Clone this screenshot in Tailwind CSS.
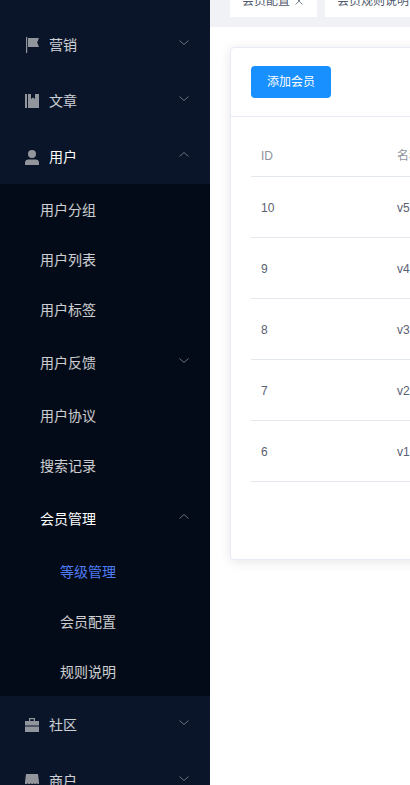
<!DOCTYPE html>
<html lang="zh-CN">
<head>
<meta charset="utf-8">
<title>等级管理</title>
<script src="https://cdn.jsdelivr.net/npm/@tailwindcss/browser@4"></script>
</head>
<body class="overflow-hidden bg-white font-['Liberation_Sans','Noto_Sans_CJK_SC',sans-serif]">
<div class="flex h-[785px] w-[410px] overflow-hidden">
    <!-- Sidebar -->
    <aside class="w-[210px] h-full shrink-0 overflow-hidden bg-[#0a1529] pt-4 text-sm text-white/80">
        <div class="flex h-14 items-center pt-[2px] pl-[25px] pr-[21px]">
            <svg class="w-[14px] h-4 mr-[10px] fill-[#93959c]" viewBox="0 0 14 16"><path d="M1 0h1.200v16H1zM3 1h11l-1.800 4.500L14 10H3z"/></svg>
            <span class="flex-1">营销</span>
            <svg class="w-[10px] h-[5px] mb-[6px] stroke-[#6a7280] fill-none" viewBox="0 0 10 5"><path d="M.5.5 5 4.500 9.500.5"/></svg>
        </div>
        <div class="flex h-14 items-center pt-[2px] pl-[25px] pr-[21px]">
            <svg class="w-[14px] h-[14px] mr-[10px] fill-[#93959c]" viewBox="0 0 14 14"><path d="M0 0h2v14H0zM3 0h3v5l2-1.500L10 5V0h4v14H3z"/></svg>
            <span class="flex-1">文章</span>
            <svg class="w-[10px] h-[5px] mb-[6px] stroke-[#6a7280] fill-none" viewBox="0 0 10 5"><path d="M.5.5 5 4.500 9.500.5"/></svg>
        </div>
        <div class="flex h-14 items-center pt-[2px] pl-[25px] pr-[21px] text-white">
            <svg class="w-[14px] h-[15px] mr-[10px] fill-[#93959c]" viewBox="0 0 14 15"><circle cx="7" cy="4" r="4"/><path d="M0 15v-2.500C0 10.500 1.500 9.500 3.500 9.500h7c2 0 3.500 1 3.500 3V15z"/></svg>
            <span class="flex-1">用户</span>
            <svg class="w-[10px] h-[5px] mb-[6px] stroke-[#6a7280] fill-none" viewBox="0 0 10 5"><path d="M.5 4.500 5 .5l4.500 4"/></svg>
        </div>
        <!-- Submenu -->
        <div class="bg-[#030b18]">
            <div class="flex h-[50px] items-center pt-[2px] pl-10">用户分组</div>
            <div class="flex h-[50px] items-center pt-[2px] pl-10">用户列表</div>
            <div class="flex h-[50px] items-center pt-[2px] pl-10">用户标签</div>
            <div class="flex h-14 items-center pt-[2px] pl-10 pr-[21px]">
                <span class="flex-1">用户反馈</span>
                <svg class="w-[10px] h-[5px] mb-[6px] stroke-[#6a7280] fill-none" viewBox="0 0 10 5"><path d="M.5.5 5 4.500 9.500.5"/></svg>
            </div>
            <div class="flex h-[50px] items-center pt-[2px] pl-10">用户协议</div>
            <div class="flex h-[50px] items-center pt-[2px] pl-10">搜索记录</div>
            <div class="flex h-14 items-center pt-[2px] pl-10 pr-[21px] text-white">
                <span class="flex-1">会员管理</span>
                <svg class="w-[10px] h-[5px] mb-[6px] stroke-[#6a7280] fill-none" viewBox="0 0 10 5"><path d="M.5 4.500 5 .5l4.500 4"/></svg>
            </div>
            <div class="flex h-[50px] items-center pt-[2px] pl-[60px] text-[#4f7cf5]">等级管理</div>
            <div class="flex h-[50px] items-center pt-[2px] pl-[60px]">会员配置</div>
            <div class="flex h-[50px] items-center pt-[2px] pl-[60px]">规则说明</div>
        </div>
        <div class="flex h-14 items-center pt-[2px] pl-[25px] pr-[21px]">
            <svg class="w-[14px] h-[14px] mr-[10px] fill-[#93959c]" viewBox="0 0 14 14"><path d="M4 0h6v3H8.800V1.200H5.200V3H4zM0 3h14v4.500H0zM0 8.500h14V14H0z"/></svg>
            <span class="flex-1">社区</span>
            <svg class="w-[10px] h-[5px] mb-[6px] stroke-[#6a7280] fill-none" viewBox="0 0 10 5"><path d="M.5.5 5 4.500 9.500.5"/></svg>
        </div>
        <div class="flex h-14 items-center pt-[2px] pl-[25px] pr-[21px]">
            <svg class="w-[14px] h-[14px] mr-[10px] fill-[#93959c]" viewBox="0 0 14 14"><path d="M1 0h12l1 8v2h-1.500l-.7-1-.8 1h-1.500l-.7-1-.8 1H6.500l-.7-1-.8 1H3.500l-.7-1-.8 1H0V8z"/></svg>
            <span class="flex-1">商户</span>
            <svg class="w-[10px] h-[5px] mb-[6px] stroke-[#6a7280] fill-none" viewBox="0 0 10 5"><path d="M.5.5 5 4.500 9.500.5"/></svg>
        </div>
    </aside>

    <!-- Main -->
    <main class="w-[200px] shrink-0 overflow-hidden">
        <div class="h-[27px] bg-[#f0f2f5] pl-5 overflow-hidden">
            <div class="flex h-[17px] items-end gap-2 w-[400px] text-xs text-[#515a6e]">
                <div class="flex h-8 w-[87px] shrink-0 items-center bg-white pl-3">
                    <span>会员配置</span>
                    <svg class="ml-[5px] w-2 h-2 stroke-[#7d8494] fill-none" viewBox="0 0 8 8"><path d="m.5.5 7 7m0-7-7 7"/></svg>
                </div>
                <div class="flex h-8 shrink-0 items-center bg-white px-3">会员规则说明</div>
            </div>
        </div>
        <div class="bg-white pl-5 pt-5">
            <div class="w-[400px] rounded border border-[#e6ebf5] bg-white shadow-[0_2px_12px_0_rgba(0,0,0,0.1)]">
                <div class="border-b border-[#e6ebf5] pl-5 pt-[18px] pb-[18px] h-[69px]">
                    <button class="h-8 w-20 rounded bg-[#1890ff] text-xs text-white">添加会员</button>
                </div>
                <div class="pl-5 pt-[10px] pb-[77px]">
                    <table class="w-[380px] table-fixed text-xs text-[#5a6072]">
                        <thead>
                            <tr class="h-[49px] border-b border-[#e3e7ee] text-[#8f939c] text-left">
                                <th class="w-[136px] pl-[10px] pt-[10px] font-normal">ID</th>
                                <th class="pl-[10px] pt-[10px] font-normal">名称</th>
                            </tr>
                        </thead>
                        <tbody>
                            <tr class="h-[61px] border-b border-[#e3e7ee]"><td class="pl-[10px] pt-[2px]">10</td><td class="pl-[10px] pt-[2px]">v5</td></tr>
                            <tr class="h-[61px] border-b border-[#e3e7ee]"><td class="pl-[10px] pt-[2px]">9</td><td class="pl-[10px] pt-[2px]">v4</td></tr>
                            <tr class="h-[61px] border-b border-[#e3e7ee]"><td class="pl-[10px] pt-[2px]">8</td><td class="pl-[10px] pt-[2px]">v3</td></tr>
                            <tr class="h-[61px] border-b border-[#e3e7ee]"><td class="pl-[10px] pt-[2px]">7</td><td class="pl-[10px] pt-[2px]">v2</td></tr>
                            <tr class="h-[61px] border-b border-[#e3e7ee]"><td class="pl-[10px] pt-[2px]">6</td><td class="pl-[10px] pt-[2px]">v1</td></tr>
                        </tbody>
                    </table>
                </div>
            </div>
        </div>
    </main>
</div>
</body>
</html>
